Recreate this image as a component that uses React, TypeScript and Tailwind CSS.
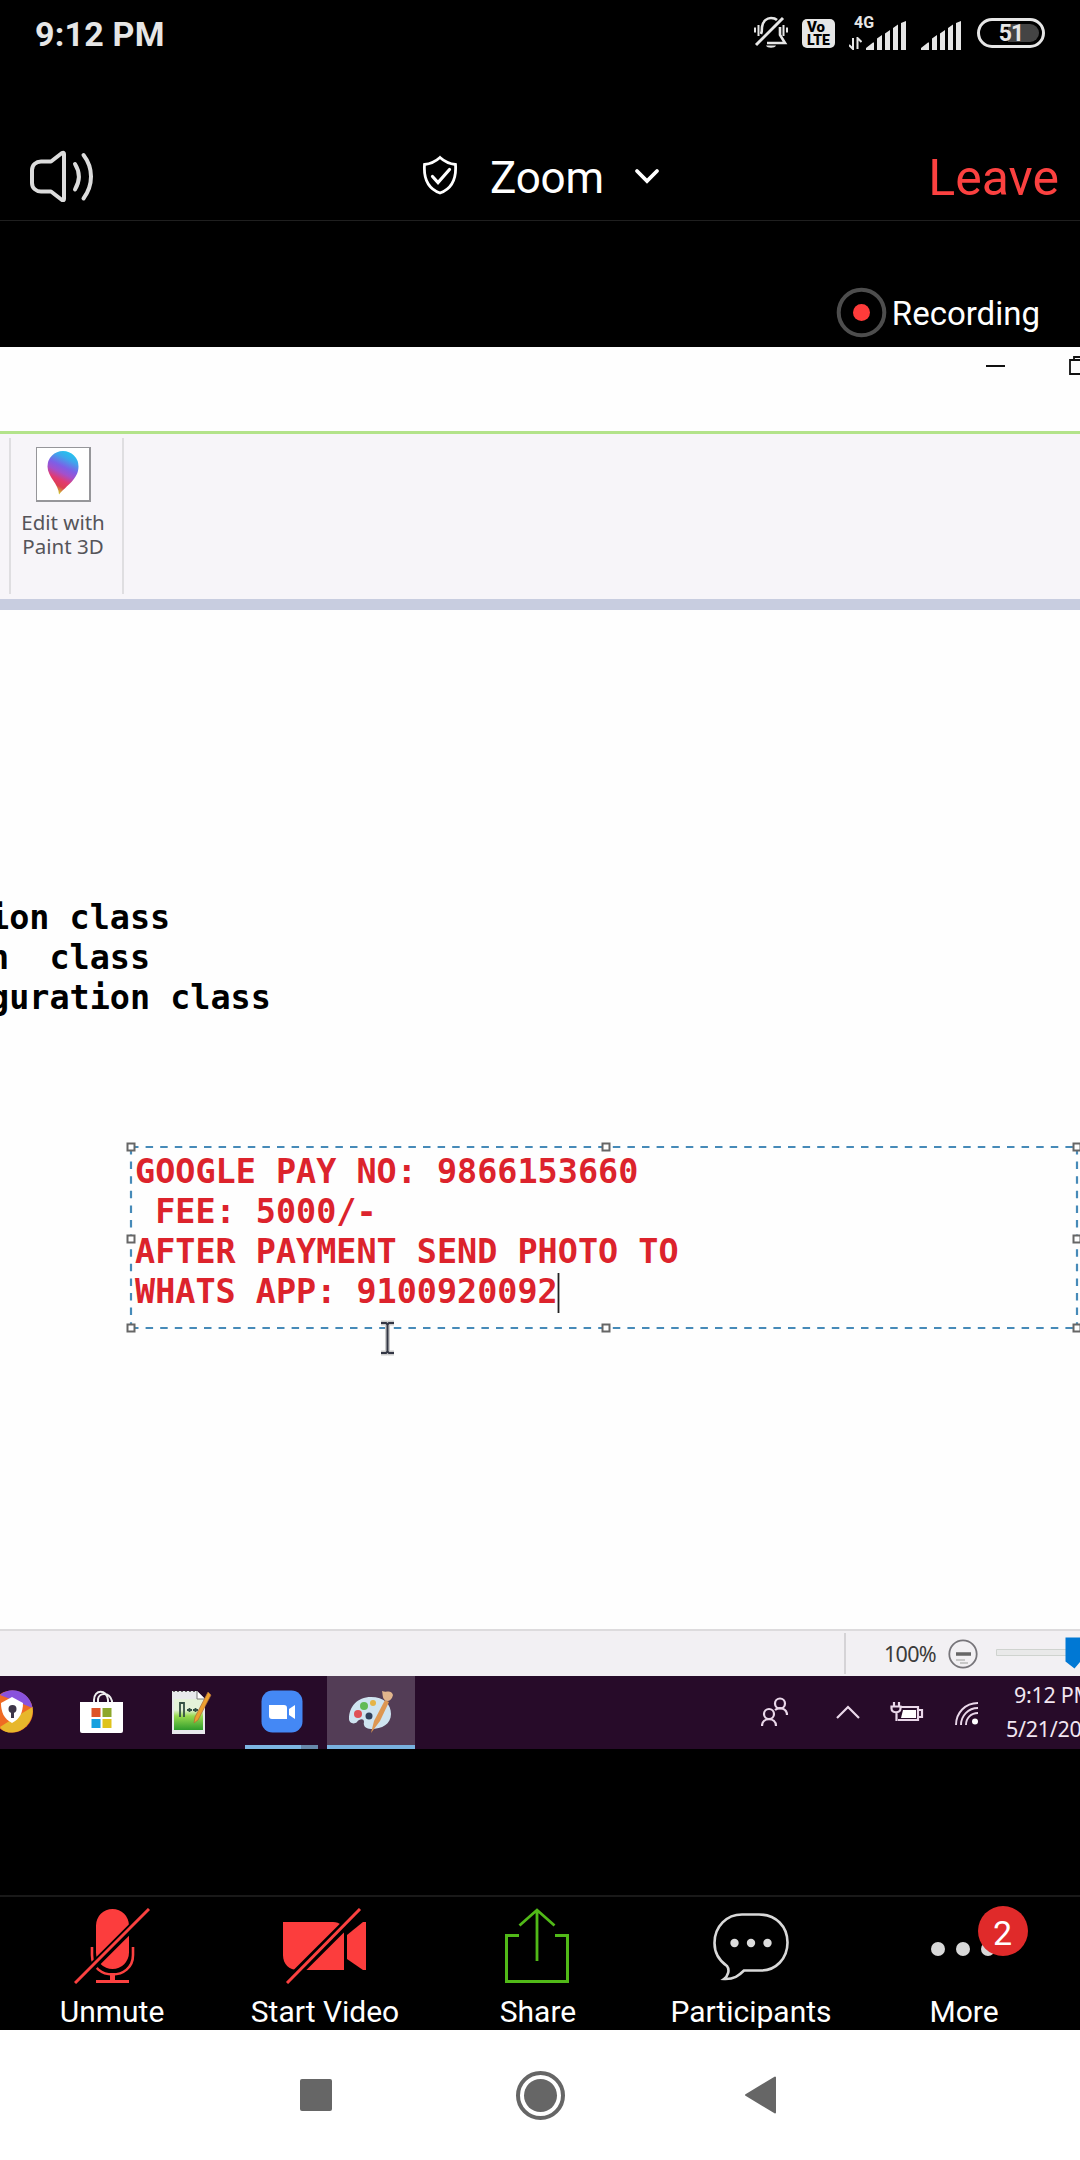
import React from "react";

const NOTO = "font-['Noto_Sans','Open_Sans',sans-serif]";

function Bars() {
  return (
    <svg width="40" height="29" viewBox="0 0 40 29" fill="#e6e6e6">
      <path d="M0 29v-2l7-5.500h1V29z M11 17.500l5-3.500v15h-5z M19 12.500l5-3.500v20h-5z M27 7l5-3.500V29h-5z M35 2l5-2v29h-5z" />
    </svg>
  );
}

function StatusBar() {
  return (
    <div className="flex h-[66px] items-center pl-[35px] pr-[35px] text-[#e6e6e6]">
      <span className="pt-px text-[34px] font-bold leading-none tracking-[0.200px]">9:12 PM</span>
      <div className="ml-auto flex items-center">
        <svg width="34" height="34" viewBox="0 0 34 34" fill="none" stroke="#e6e6e6" strokeWidth="2.600">
          <path d="M2 29L29 2" strokeWidth="3" />
          <path d="M7 18c1-2 1-5 1-7C9 5 13 2 17 2c3 0 5 1 6 2" />
          <path d="M26 11v8l5 8H13" />
          <path d="M1 11.500v5M4.500 9v11M33 11.500v5M29.500 9v11" strokeWidth="2" />
          <path d="M12 29.500h10c-1 3-9 3-10 0z" fill="#e6e6e6" stroke="none" />
        </svg>
        <div className="ml-[14px] flex h-[29px] w-[33px] flex-col items-center rounded-[5px] bg-[#e6e6e6] text-black">
          <span className="mr-[5px] mt-[2px] text-[15px] font-black leading-[13px]">Vo</span>
          <span className="text-[14px] font-black leading-[13px]">LTE</span>
        </div>
        <div className="relative ml-[14px] flex h-[33px] w-[58px] items-end">
          <span className="absolute left-[5px] top-[-1px] text-[16px] font-bold leading-[14px]">4G</span>
          <svg className="mr-[4px]" width="13" height="13" viewBox="0 0 13 13" fill="none" stroke="#e6e6e6" strokeWidth="2">
            <path d="M4 1v11L0 8M8.500 12V1l4 4" />
          </svg>
          <Bars />
        </div>
        <div className="ml-[14px] flex h-[33px] items-end"><Bars /></div>
        <div className="relative ml-[16px] flex h-[30px] w-[68px] items-center justify-center rounded-full border-[3px] border-[#e6e6e6]">
          <div className="absolute right-[3px] top-[3px] h-[18px] w-[31px] rounded-r-full bg-[#444]" />
          <span className="relative text-[23px] font-bold leading-none tracking-[-1px]">51</span>
        </div>
      </div>
    </div>
  );
}

function MeetingHeader() {
  return (
    <div className="flex h-[155px] items-center border-b border-[#1f1f1f] pl-[30px] pr-[21px] pt-[67px]">
      <div className="flex w-[392px] items-center pb-[2px]">
        <svg width="66" height="52" viewBox="0 0 66 52" fill="none" stroke="#dcdcdc" strokeWidth="4" strokeLinejoin="round" strokeLinecap="round">
          <path d="M2 20c0-5 4-8.500 9-8.500h10L32 3Q34 2 34 4v45q0 2-2 1L21 41.500H11c-5 0-9-3.500-9-8.500z" />
          <path d="M45 14c5 8 5 17 0 25.500M53.500 5c10 13 10 30 0 43.500" />
        </svg>
      </div>
      <svg className="mb-[4px]" width="36" height="40" viewBox="0 0 36 40" fill="none" stroke="#fff" strokeWidth="2.800">
        <path d="M18 2.500C13 7 8 9 2.500 9.500c-1 14 3 24 15.500 28.500C30.500 33.500 34.500 23.500 33.500 9.500 28 9 23 7 18 2.500z" />
        <path d="M10.500 21.500l5.500 6 11.500-13" strokeWidth="3.200" strokeLinecap="round" />
      </svg>
      <span className="ml-[32px] pt-[2px] text-[44px] leading-[52px] tracking-[-0.200px] text-white">Zoom</span>
      <svg className="ml-[30px]" width="26" height="18" viewBox="0 0 26 18" fill="none" stroke="#fff" strokeWidth="3.800" strokeLinecap="round">
        <path d="M3 3l10 10L23 3" />
      </svg>
      <span className="ml-auto pt-[2px] text-[50px] leading-[52px] text-[#fb4140]">Leave</span>
    </div>
  );
}

function RecordingStrip() {
  return (
    <div className="flex h-[126px] items-center justify-end pr-[40px] pt-[57px]">
      <svg width="51" height="51" viewBox="0 0 51 51">
        <circle cx="25.500" cy="25.500" r="22.800" fill="none" stroke="#4d4d4d" strokeWidth="4" />
        <circle cx="25.500" cy="25.500" r="8.500" fill="#fe3b3a" />
      </svg>
      <span className="ml-[5px] pt-[3px] text-[33px] leading-[38px] text-white">Recording</span>
    </div>
  );
}

function PaintChrome() {
  return (
    <>
      <div className="flex h-[84px] items-start justify-end overflow-hidden bg-[#fefefe]">
        <svg className="mt-[9px]" width="95" height="20" viewBox="0 0 95 20" fill="none" stroke="#111" strokeWidth="2">
          <path d="M1 10h19" />
          <path d="M85 18h20V4H85zM89 4V1h20" strokeWidth="1.800" />
        </svg>
      </div>
      <div className="flex h-[168px] items-start border-t-[3px] border-[#b3e38a] bg-[#f7f5f9] pt-[4px]">
        <div className="ml-[9px] flex h-[156px] w-[115px] flex-col items-center border-x-[2px] border-[#dfdee1] pr-[7px] pt-[9px]">
          <div className="flex h-[55px] w-[55px] items-center justify-center border-[1.500px] border-b-[2px] border-r-[2px] border-[#96969a] bg-white">
            <svg className="mb-[3px]" width="32" height="45" viewBox="0 0 32 45">
              <defs>
                <linearGradient id="drop" x1="0.700" y1="0" x2="0.350" y2="1">
                  <stop offset="0" stopColor="#20c8ee" />
                  <stop offset="0.180" stopColor="#3ea6ec" />
                  <stop offset="0.380" stopColor="#7d5fe6" />
                  <stop offset="0.520" stopColor="#a350cc" />
                  <stop offset="0.680" stopColor="#e23a70" />
                  <stop offset="0.820" stopColor="#dc3f52" />
                  <stop offset="0.950" stopColor="#cdbb31" />
                </linearGradient>
              </defs>
              <path d="M16 1a15.500 15.500 0 0 1 15.500 15.500C31.500 29 20 35 12 44.500 12 34 .5 27 .5 16.500A15.500 15.500 0 0 1 16 1z" fill="url(#drop)" />
            </svg>
          </div>
          <div className={`mt-[8px] whitespace-nowrap text-center text-[20.500px] leading-[24px] text-[#55545a] ${NOTO}`}>
            Edit with<br />Paint 3D
          </div>
        </div>
      </div>
      <div className="h-[11px] bg-[#c8cde0]" />
    </>
  );
}

function Selection() {
  const handles = [[131, 5], [606, 5], [1077, 5], [131, 97], [1077, 97], [131, 186], [606, 186], [1077, 186]];
  return (
    <svg className="absolute left-0 top-[532px]" width="1080" height="215" viewBox="0 0 1080 215" fill="none">
      <path d="M131 5H1077M131 186H1077M131 5V186M1077 5V186" stroke="#468ab8" strokeWidth="2.200" strokeDasharray="7.500 7.100" />
      {handles.map(([x, y]) => (
        <rect key={`${x}-${y}`} x={x - 3.500} y={y - 3.500} width="7" height="7" fill="#fff" stroke="#666" strokeWidth="2" />
      ))}
      <path d="M558.500 131v40" stroke="#222" strokeWidth="1.800" />
      <path d="M381 181h5l1.500 1.500L389 181h5M387.500 182v28M381 211h5l1.500-1.500L389 211h5" stroke="#ccc" strokeWidth="5" />
      <path d="M381 181h5l1.500 1.500L389 181h5M387.500 182v28M381 211h5l1.500-1.500L389 211h5" stroke="#333644" strokeWidth="2" />
    </svg>
  );
}

function Canvas() {
  return (
    <div className="relative h-[1019px] overflow-hidden bg-[#fefefe] pt-[288px] font-['DejaVu_Sans_Mono',monospace] text-[33.450px] font-bold leading-[40.200px]">
      <div className="-ml-[11px] whitespace-pre text-black">{"ion class"}</div>
      <div className="-ml-[11px] whitespace-pre text-black">{"n  class"}</div>
      <div className="-ml-[11px] whitespace-pre text-black">{"guration class"}</div>
      <div className="ml-[135px] mt-[133px] whitespace-pre text-[#dc232c]">
        {"GOOGLE PAY NO: 9866153660\n FEE: 5000/-\nAFTER PAYMENT SEND PHOTO TO\nWHATS APP: 9100920092"}
      </div>
      <Selection />
    </div>
  );
}

function PaintStatus() {
  return (
    <div className="flex h-[47px] items-center justify-end overflow-hidden border-t-[2px] border-[#dddbdd] bg-[#f2f0f3]">
      <div className="h-[41px] w-[2px] bg-[#d5d3d6]" />
      <span className={`ml-[38px] w-[64px] text-[21.500px] leading-none tracking-[-0.700px] text-[#3b3b3b] ${NOTO}`}>100%</span>
      <svg width="132" height="45" viewBox="0 0 132 45" fill="none">
        <circle cx="15" cy="23" r="13.700" stroke="#77757a" strokeWidth="1.800" />
        <path d="M8 23h15" stroke="#666" strokeWidth="3.500" />
        <path d="M8 29h9M12 32h8" stroke="#bbb" strokeWidth="1.500" />
        <path d="M48.500 18.500h80v6h-80z" fill="#e9e9e9" stroke="#cfd3cf" />
        <path d="M117.500 6.500h20v24h-5l-6 7-9-7z" fill="#0078d4" />
      </svg>
    </div>
  );
}

function Taskbar() {
  return (
    <div className="flex h-[73px] overflow-hidden bg-[#270b29]">
      <svg className="mt-[14px] shrink-0" width="43" height="43" viewBox="0 0 43 43">
        <circle cx="12" cy="21.500" r="21" fill="#ef6a23" />
        <path d="M0 5C12-5 30 2 32.500 18l-12-5z" fill="#8952dc" />
        <path d="M32.500 17c2 14-9 25-20 25.500C5 43 2 40 0 37l14-9z" fill="#e7b72b" />
        <path d="M12 7l11 6c0 9-3 16-11 20C4 29 1 22 1 13z" fill="#fff" />
        <circle cx="12.500" cy="19" r="4" fill="#3d3548" />
        <path d="M11 20h3v8h-3z" fill="#3d3548" />
      </svg>
      <svg className="ml-[37px] mt-[14px] shrink-0" width="43" height="44" viewBox="0 0 43 44">
        <path d="M14 14V10C14-1 27-1 28 10v4M18 14V9c1-6 11-8 14 2v3" fill="none" stroke="#eee" strokeWidth="2" />
        <path d="M0 12h43v29q0 2-2 2H2q-2 0-2-2z" fill="#fff" />
        <path d="M11.500 18h9v9h-9z" fill="#dd5428" />
        <path d="M22.500 18h9v9h-9z" fill="#8da72b" />
        <path d="M11.500 29h9v9h-9z" fill="#16a0df" />
        <path d="M22.500 29h9v9h-9z" fill="#dfc31c" />
      </svg>
      <svg className="ml-[48px] mt-[13px] shrink-0" width="42" height="46" viewBox="0 0 42 46">
        <defs>
          <linearGradient id="page" x1="0" y1="0" x2="0" y2="1">
            <stop offset="0.350" stopColor="#e5f2d9" />
            <stop offset="0.550" stopColor="#97d94e" />
            <stop offset="1" stopColor="#2e9c2c" />
          </linearGradient>
        </defs>
        <path d="M1 2h25l8 8v35H1z" fill="#e8e9ec" />
        <path d="M3 10h29v31H3z" fill="url(#page)" />
        <path d="M26 2v8h8" fill="#fff" stroke="#777" />
        <path d="M2 2.500h23" stroke="#666" strokeDasharray="2 2" />
        <path d="M9 28V14h4v14M16 21h5M18.500 19v4M22 21h5M24.500 19v4" fill="none" stroke="#345044" strokeWidth="1.800" />
        <path d="M37 3l3 3-13 25-4 3 1-6z" fill="#eda02e" stroke="#a96b3a" strokeWidth="0.700" />
      </svg>
      <div className="ml-[32px] flex w-[73px] shrink-0 flex-col items-center">
        <svg className="mt-[14px]" width="42" height="43" viewBox="0 0 42 43">
          <rect x="0.500" y="0.500" width="41" height="42" rx="11" fill="#4488f5" />
          <path d="M8 15h15q3 0 3 3v11H11q-3 0-3-3zM28 19l6-4v14l-6-4z" fill="#fff" />
        </svg>
        <div className="mt-auto flex h-[4px] w-full bg-[#7cb6e2]"><div className="ml-auto w-[17px] bg-[#6688aa]" /></div>
      </div>
      <div className="ml-[9px] flex w-[88px] shrink-0 flex-col items-center bg-[#533d56]">
        <svg className="mt-[14px]" width="46" height="45" viewBox="0 0 46 45">
          <path d="M1 29C1 17 9 7 23 7c13 0 20 7 20 17S34 39 23 39c-6 0-8-4-7-7 0-4-5-3-7 0-3 3-8 1-8-3z" fill="#cfe4f0" />
          <circle cx="10" cy="24" r="4" fill="#df5055" />
          <circle cx="16" cy="16" r="4" fill="#62bb55" />
          <circle cx="25" cy="13" r="3" fill="#e5b447" />
          <circle cx="21" cy="26" r="3.500" fill="#30415c" />
          <path d="M23 43l3-12 11-21 4 2-9 19z" fill="#dd9751" />
          <path d="M34 1c5 2 9-2 11 4-1 4-3 6-6 6-5-1-4-6-5-10z" fill="#e1b58d" />
        </svg>
        <div className="mt-auto h-[4px] w-full bg-[#78b2df]" />
      </div>
      <svg className="ml-[346px] mt-[20px] shrink-0" width="220" height="32" viewBox="0 0 220 32" fill="none" stroke="#ead8ea" strokeWidth="2.200">
        <circle cx="19" cy="7.500" r="5" /><circle cx="8" cy="18" r="5" />
        <path d="M1 30c0-9 14-9 14 0M14 14c5-4 12-1 12 5" />
        <path d="M76 22l11-11 11 11" />
        <path d="M139 11h18v13h-20M158 14h3v7h-3" /><path d="M142 14h13v8h-15z" fill="#fff" stroke="none" />
        <path d="M133 6v4M138 6v4M130.500 10.500h9v2c0 5-9 5-9 0zM135.500 16v9" />
        <circle cx="214" cy="25.500" r="3" fill="#fff" stroke="none" />
        <path d="M195 29C195 17 204 7 217 7M200 29c0-9 7-17 17-17M205 29c0-7 5-12 12-12" strokeWidth="1.900" />
      </svg>
      <div className={`ml-[25px] mt-[2px] shrink-0 text-[21.500px] leading-[34px] tracking-[-0.300px] text-[#f1e6f1] ${NOTO}`}>
        <div className="ml-[8px]">9:12 PM</div>
        <div>5/21/2021</div>
      </div>
    </div>
  );
}

function ToolButton({ label, children }: { label: string; children: React.ReactNode }) {
  return (
    <div className="flex w-[213px] flex-col items-center">
      <div className="relative flex h-[96px] items-start pt-[11px]">{children}</div>
      <span className="ml-[1px] mt-[2px] whitespace-nowrap text-[30px] leading-[34px] text-white">{label}</span>
    </div>
  );
}

function MeetingToolbar() {
  return (
    <div className="mt-[146px] flex h-[135px] shrink-0 border-t-2 border-[#191919] pl-[5px]">
      <ToolButton label="Unmute">
        <svg width="76" height="76" viewBox="0 0 76 76" fill="none" stroke="#fb4140">
          <path d="M22 17.500a16.500 16.500 0 0 1 33 0v27a16.500 16.500 0 0 1-33 0z" fill="#fc3d3d" stroke="none" />
          <path d="M18 39v8c0 26 41 26 41 0v-8" strokeWidth="2.600" />
          <path d="M36 65h5v7h-5z" fill="#fb4140" stroke="none" />
          <path d="M22 73.500h33" strokeWidth="3" />
          <path d="M2 75L76 1" stroke="#000" strokeWidth="8" />
          <path d="M1 75L75 1" strokeWidth="3" />
        </svg>
      </ToolButton>
      <ToolButton label="Start Video">
        <svg className="ml-[1px]" width="84" height="76" viewBox="0 0 84 76" fill="none">
          <path d="M0 14h50c7 0 11 4 11 11v37H15C6 62 0 56 0 47z" fill="#fc3d3d" />
          <path d="M64 27l16-13h3v48h-3L64 51z" fill="#fc3d3d" />
          <path d="M4 75L78 1" stroke="#000" strokeWidth="9" />
          <path d="M4 75L77 1" stroke="#fb4140" strokeWidth="3" />
        </svg>
      </ToolButton>
      <ToolButton label="Share">
        <svg className="mr-[2px]" width="66" height="76" viewBox="0 0 66 76" fill="none" stroke="#51b918" strokeWidth="3">
          <path d="M15 27.500H2.500V73.500H63.500V27.500H51" />
          <path d="M33 53V3M15.500 17.500L33 2l17.500 15.500" strokeWidth="2.800" />
        </svg>
      </ToolButton>
      <ToolButton label="Participants">
        <svg className="mt-[5px]" width="76" height="68" viewBox="0 0 76 68" fill="none">
          <path d="M29 1.500h17c17 0 28.500 12 28.500 28S63 57.500 48 57.500H31c-5 5-10 9-20 8.500 4-3 6-9 3-13C6 47.500 1.500 40 1.500 30 1.500 13 14 1.500 29 1.500z" stroke="#d8d8d8" strokeWidth="2.600" />
          <circle cx="21.500" cy="30" r="4.200" fill="#dcdcdc" /><circle cx="38" cy="30" r="4.200" fill="#dcdcdc" /><circle cx="54.500" cy="30" r="4.200" fill="#dcdcdc" />
        </svg>
      </ToolButton>
      <ToolButton label="More">
        <div className="mr-[2px] flex gap-[11px] pt-[34px]">
          <span className="size-[14px] rounded-full bg-[#d8d8d8]" />
          <span className="size-[14px] rounded-full bg-[#d8d8d8]" />
          <span className="size-[14px] rounded-full bg-[#d8d8d8]" />
        </div>
        <div className="absolute left-[47px] top-[9px] flex size-[50px] items-center justify-center rounded-full bg-[#e02a2a] pt-[3px] text-[34px] leading-none text-white">2</div>
      </ToolButton>
    </div>
  );
}

function NavBar() {
  return (
    <div className="flex h-[130px] items-center bg-white pl-[300px]">
      <div className="size-[32px] rounded-[2px] bg-[#666]" />
      <div className="ml-[184px] flex size-[49px] items-center justify-center rounded-full border-[4px] border-[#666]">
        <div className="size-[33px] rounded-full bg-[#666]" />
      </div>
      <svg className="ml-[180px]" width="31" height="38" viewBox="0 0 31 38" fill="#666" stroke="#666" strokeWidth="2" strokeLinejoin="round">
        <path d="M1 19L30 1.500v35z" />
      </svg>
    </div>
  );
}

export default function App() {
  return (
    <div className="flex h-[2160px] w-[1080px] flex-col overflow-hidden bg-black font-['Roboto',sans-serif]">
      <StatusBar />
      <MeetingHeader />
      <RecordingStrip />
      <div>
        <PaintChrome />
        <Canvas />
        <PaintStatus />
        <Taskbar />
      </div>
      <MeetingToolbar />
      <NavBar />
    </div>
  );
}
